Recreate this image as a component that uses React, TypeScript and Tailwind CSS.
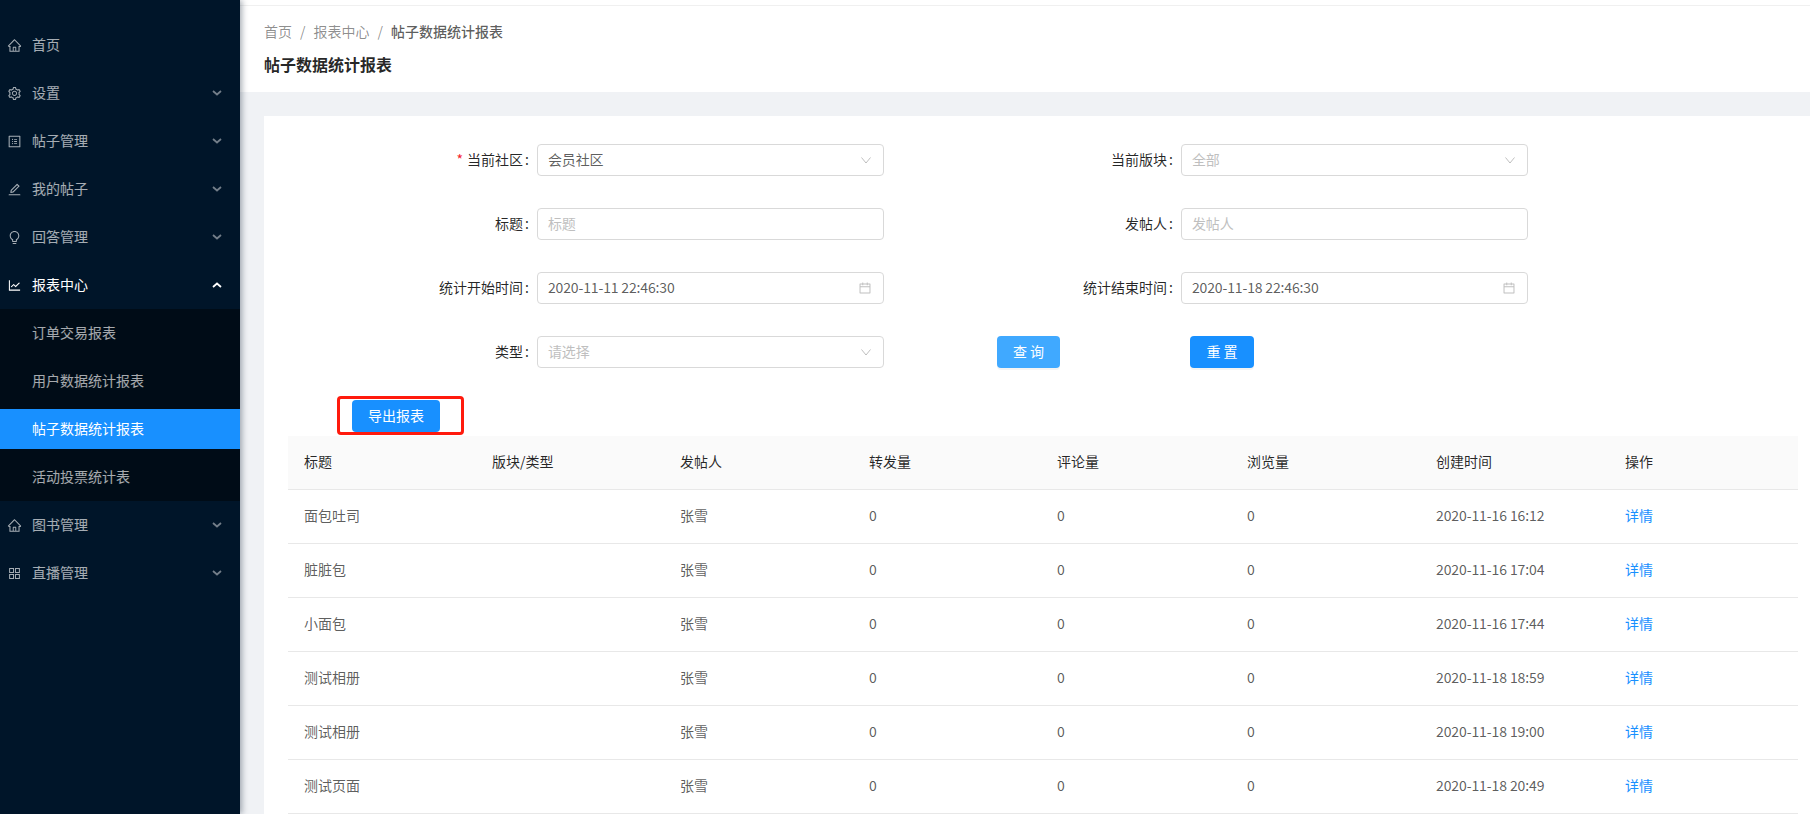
import React from 'react';
import {
  AiOutlineHome,
  AiOutlineSetting,
  AiOutlineProfile,
  AiOutlineEdit,
  AiOutlineBulb,
  AiOutlineLineChart,
  AiOutlineAppstore,
  AiOutlineCalendar,
} from 'react-icons/ai';

const rows = [
  { title: '面包吐司', time: '2020-11-16 16:12' },
  { title: '脏脏包', time: '2020-11-16 17:04' },
  { title: '小面包', time: '2020-11-16 17:44' },
  { title: '测试相册', time: '2020-11-18 18:59' },
  { title: '测试相册', time: '2020-11-18 19:00' },
  { title: '测试页面', time: '2020-11-18 20:49' },
];

const headers = ['标题', '版块/类型', '发帖人', '转发量', '评论量', '浏览量', '创建时间', '操作'];

const Arrow = ({ up }: { up?: boolean }) => (
  <svg width="10" height="6" viewBox="0 0 10 6" className={up ? 'ml-auto mr-[18px] text-white' : 'ml-auto mr-[18px] text-white/45'}>
    <path d={up ? 'M1 5 L5 1.5 L9 5' : 'M1 1 L5 4.5 L9 1'} fill="none" stroke="currentColor" strokeWidth="1.8" />
  </svg>
);

const MenuItem = ({ icon: Icon, label, arrow, open }: { icon: React.ElementType; label: string; arrow?: boolean; open?: boolean }) => (
  <div className={`flex h-10 items-center pl-[7px] ${open ? 'mb-1 text-white' : 'mb-2 text-white/65'}`}>
    <Icon size={15} className="mr-2.5 shrink-0" />
    <span className="-mt-0.5">{label}</span>
    {arrow && <Arrow up={open} />}
  </div>
);

const SubItem = ({ label, active }: { label: string; active?: boolean }) => (
  <div className={`flex h-10 items-center pb-0.5 pl-8 ${active ? 'bg-[#1890ff] text-white' : 'text-white/65'}`}>{label}</div>
);

const Label = ({ text, required }: { text: string; required?: boolean }) => (
  <label className="flex w-[273px] shrink-0 items-center justify-end pb-0.5 pr-2 text-black/85">
    {required && <span className="mr-1 text-[#f5222d]">*</span>}
    {text}
    <span className="ml-0.5">:</span>
  </label>
);

const Field = ({ value, placeholder, icon }: { value?: string; placeholder?: string; icon?: 'down' | 'calendar' }) => (
  <div className="flex h-8 w-[347px] shrink-0 items-center justify-between rounded border border-[#d9d9d9] bg-white px-[10px]">
    <span className={`-mt-0.5 tracking-[-0.15px] ${value ? 'text-black/65' : 'text-[#bfbfbf]'}`}>{value || placeholder}</span>
    {icon === 'down' && (
      <svg width="10" height="7" viewBox="0 0 10 7" className="mr-[2px] text-black/25">
        <path d="M0.5 0.5 L5 6 L9.5 0.5" fill="none" stroke="currentColor" strokeWidth="1" />
      </svg>
    )}
    {icon === 'calendar' && <AiOutlineCalendar size={14} className="mr-px text-black/25" />}
  </div>
);

const FormRow = ({ children }: { children: React.ReactNode }) => <div className="flex h-8 items-center">{children}</div>;

const cellClass = 'border-b border-[#e8e8e8] px-4 pb-1';

export default function App() {
  return (
    <div className="flex h-[814px] w-[1810px] overflow-hidden bg-[#f0f2f5] text-sm font-['Noto_Sans_CJK_SC','Noto_Sans',sans-serif]">
      <aside className="z-10 h-full w-60 shrink-0 bg-[#001529] pt-[25px] shadow-[2px_0_6px_rgba(0,21,41,0.35)]">
        <MenuItem icon={AiOutlineHome} label="首页" />
        <MenuItem icon={AiOutlineSetting} label="设置" arrow />
        <MenuItem icon={AiOutlineProfile} label="帖子管理" arrow />
        <MenuItem icon={AiOutlineEdit} label="我的帖子" arrow />
        <MenuItem icon={AiOutlineBulb} label="回答管理" arrow />
        <MenuItem icon={AiOutlineLineChart} label="报表中心" arrow open />
        <div className="mb-1 flex flex-col gap-2 bg-[#000c17] py-1">
          <SubItem label="订单交易报表" />
          <SubItem label="用户数据统计报表" />
          <SubItem label="帖子数据统计报表" active />
          <SubItem label="活动投票统计表" />
        </div>
        <MenuItem icon={AiOutlineHome} label="图书管理" arrow />
        <MenuItem icon={AiOutlineAppstore} label="直播管理" arrow />
      </aside>

      <main className="min-w-0 flex-1">
        <div className="h-[6px] border-b border-[#f0f0f0] bg-white" />
        <header className="h-[86px] bg-white px-6 pt-[15px]">
          <div className="flex h-5 items-center gap-2 text-black/45">
            <span>首页</span>
            <span>/</span>
            <span>报表中心</span>
            <span>/</span>
            <span className="font-medium text-black/65">帖子数据统计报表</span>
          </div>
          <h1 className="mt-[11px] text-base font-semibold text-black/85">帖子数据统计报表</h1>
        </header>

        <section className="ml-6 mt-6 h-full bg-white pt-7">
          <div className="flex flex-col gap-8">
            <FormRow>
              <Label text="当前社区" required />
              <Field value="会员社区" icon="down" />
              <div className="ml-[24px]">
                <Label text="当前版块" />
              </div>
              <Field placeholder="全部" icon="down" />
            </FormRow>
            <FormRow>
              <Label text="标题" />
              <Field placeholder="标题" />
              <div className="ml-[24px]">
                <Label text="发帖人" />
              </div>
              <Field placeholder="发帖人" />
            </FormRow>
            <FormRow>
              <Label text="统计开始时间" />
              <Field value="2020-11-11 22:46:30" icon="calendar" />
              <div className="ml-[24px]">
                <Label text="统计结束时间" />
              </div>
              <Field value="2020-11-18 22:46:30" icon="calendar" />
            </FormRow>
            <FormRow>
              <Label text="类型" />
              <Field placeholder="请选择" icon="down" />
              <button className="ml-[113px] h-8 w-[63px] rounded bg-[#40a9ff] pb-0.5 text-white shadow-[0_2px_0_rgba(0,0,0,0.045)]">查 询</button>
              <button className="ml-[130px] h-8 w-[64px] rounded bg-[#1890ff] pb-0.5 text-white shadow-[0_2px_0_rgba(0,0,0,0.045)]">重 置</button>
            </FormRow>
          </div>

          <div className="relative ml-[88px] mt-8 h-8 w-[88px]">
            <button className="h-8 w-[88px] rounded bg-[#1890ff] pb-0.5 text-white">导出报表</button>
            <div className="absolute left-[-15px] top-[-4px] h-[39px] w-[127px] rounded-sm border-[3px] border-[#ff1a0d]" />
          </div>

          <table className="ml-6 mt-1 w-[1510px] table-fixed border-separate border-spacing-0">
            <colgroup>
              <col className="w-[188px]" />
              <col className="w-[188px]" />
              <col className="w-[189px]" />
              <col className="w-[188px]" />
              <col className="w-[190px]" />
              <col className="w-[189px]" />
              <col className="w-[189px]" />
              <col className="w-[189px]" />
            </colgroup>
            <thead>
              <tr className="h-[54px] bg-[#fafafa]">
                {headers.map(h => (
                  <th key={h} className={`${cellClass} text-left font-normal text-black/85`}>{h}</th>
                ))}
              </tr>
            </thead>
            <tbody>
              {rows.map((row, i) => (
                <tr key={i} className="h-[54px] text-black/65">
                  <td className={cellClass}>{row.title}</td>
                  <td className={cellClass}></td>
                  <td className={cellClass}>张雪</td>
                  <td className={cellClass}>0</td>
                  <td className={cellClass}>0</td>
                  <td className={cellClass}>0</td>
                  <td className={`${cellClass} tracking-[-0.1px]`}>{row.time}</td>
                  <td className={`${cellClass} text-[#1890ff]`}>详情</td>
                </tr>
              ))}
            </tbody>
          </table>
        </section>
      </main>
    </div>
  );
}
